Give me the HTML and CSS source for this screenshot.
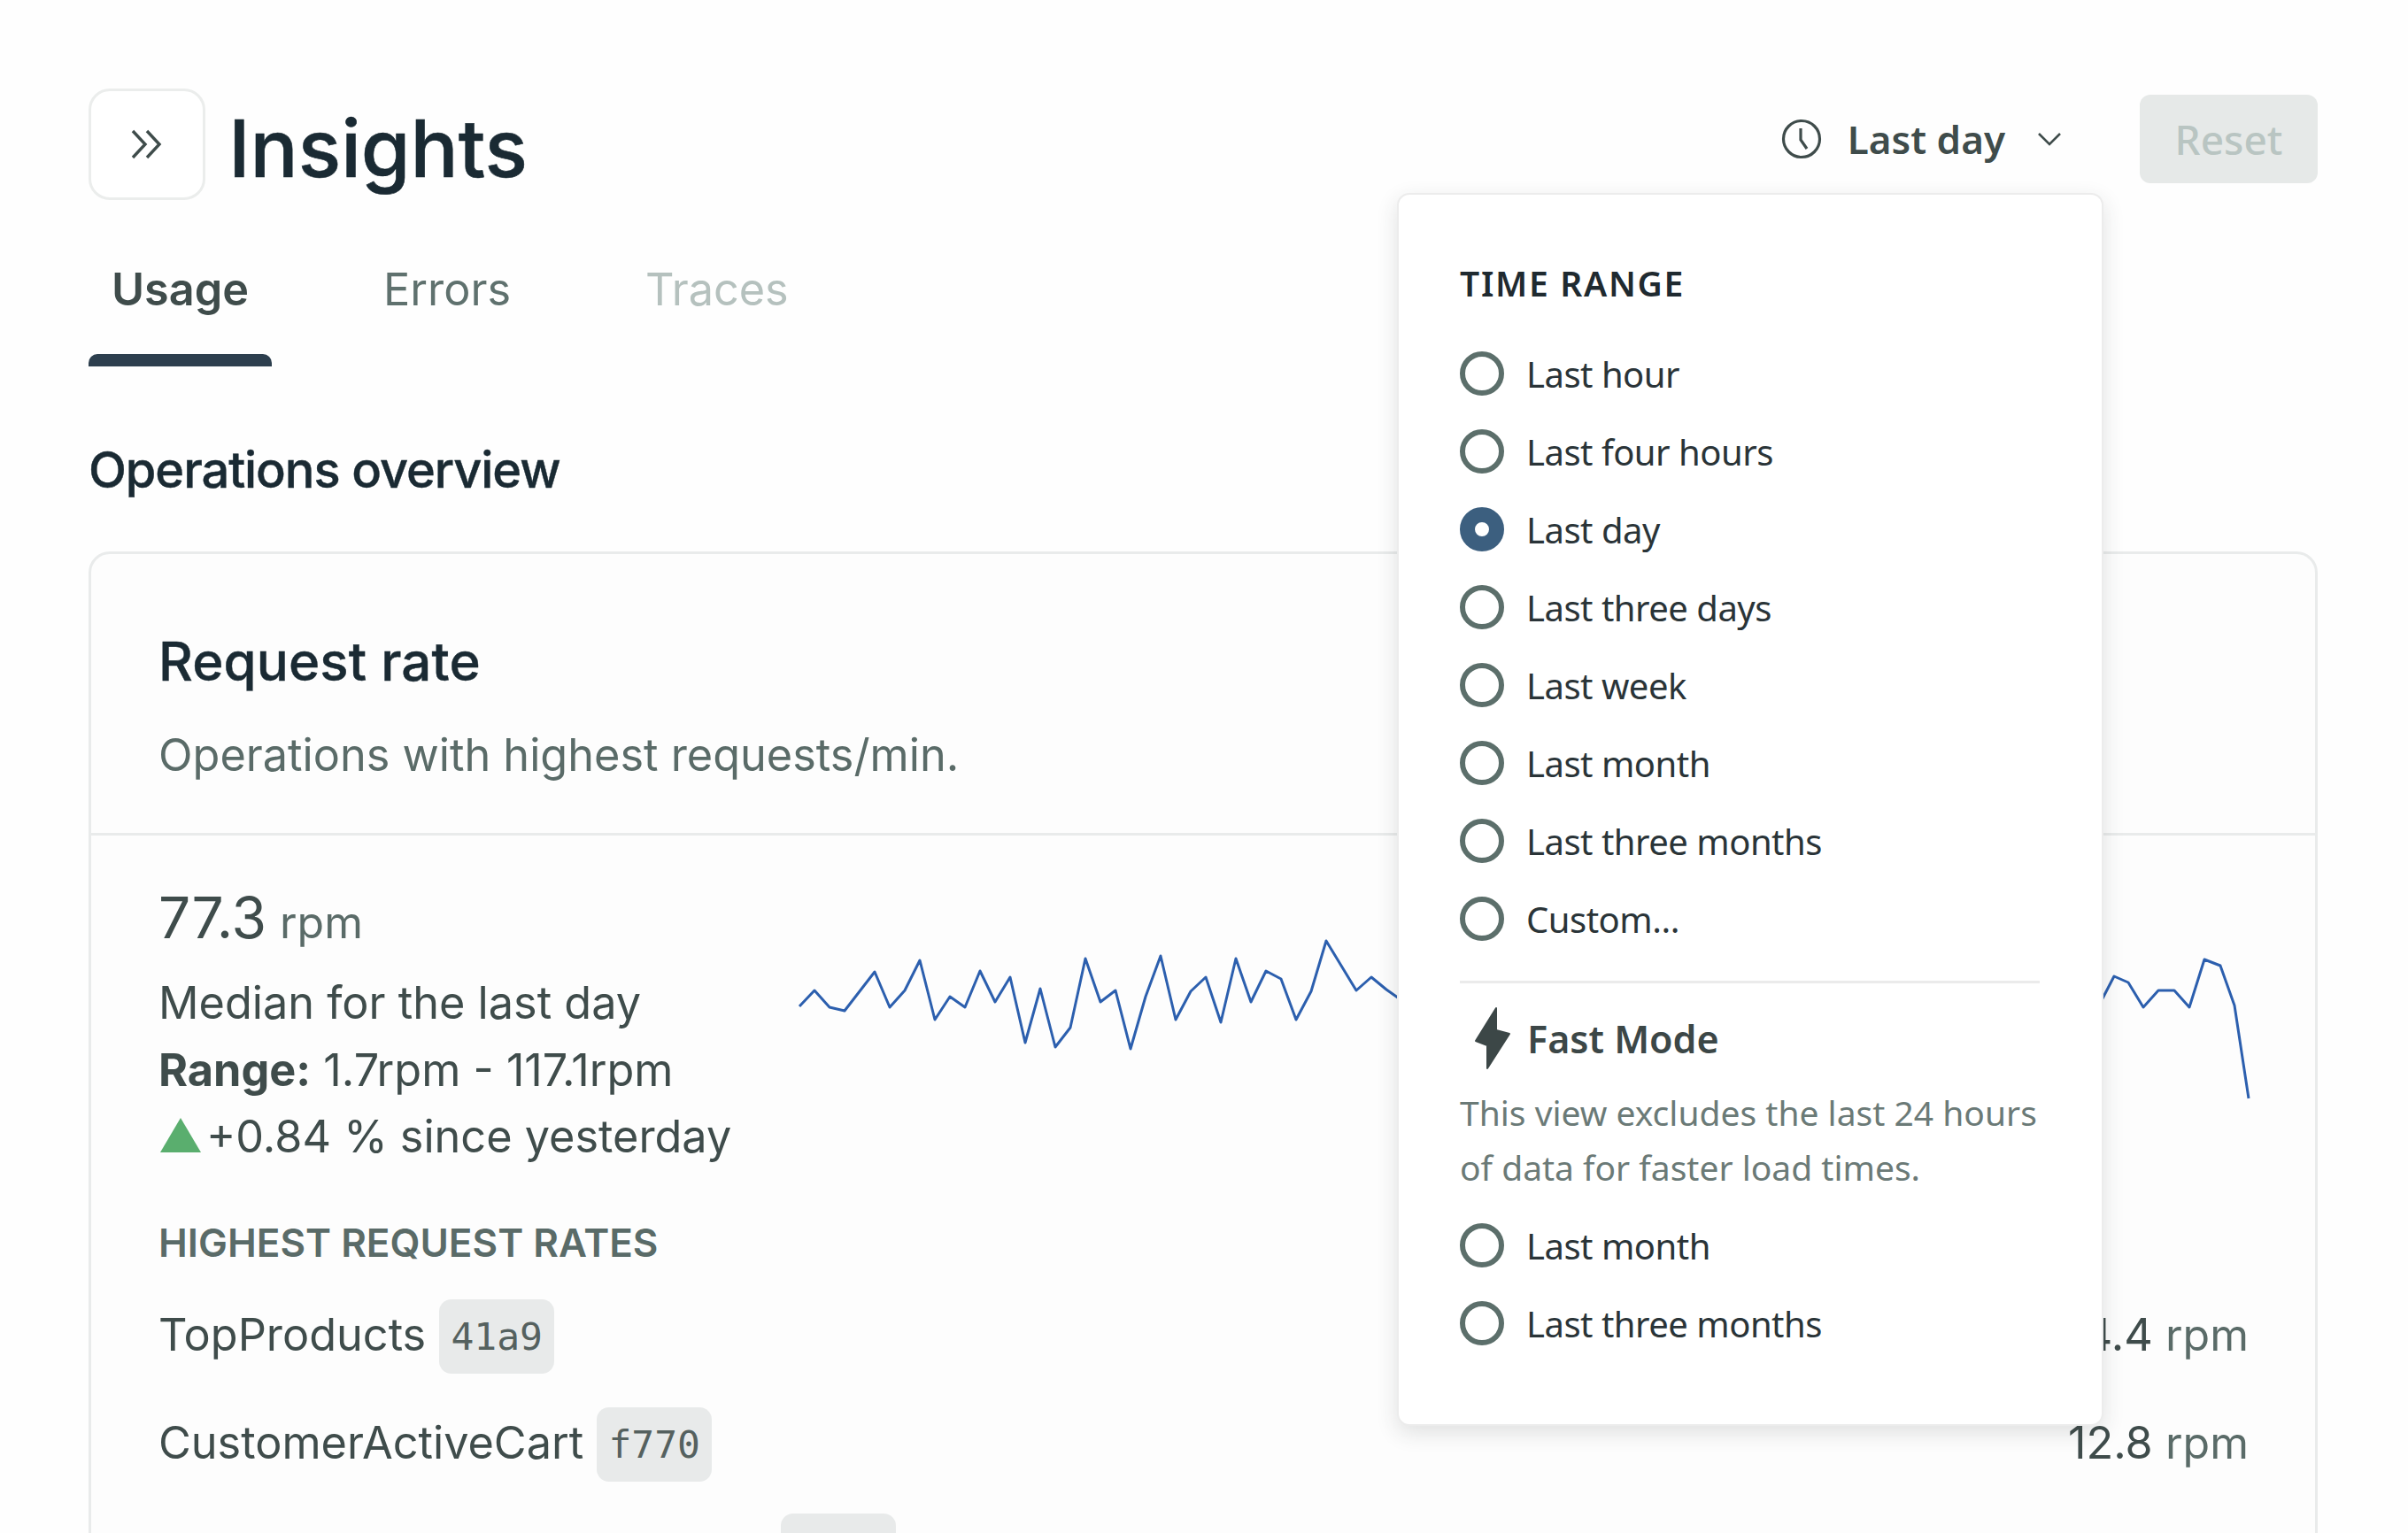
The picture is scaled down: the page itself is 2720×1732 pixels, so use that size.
FILE: index.html
```html
<!DOCTYPE html>
<html lang="en">
<head>
    <meta charset="UTF-8">
    <title>Insights</title>
    <link rel="stylesheet" href="styles.css">
</head>
<body>
    <div class="page">
        <!-- Header -->
        <header class="header">
            <button class="expand-btn">
                <svg width="40" height="36" viewBox="0 0 40 36" fill="none" stroke="#3f4c4b" stroke-width="3.4">
                    <path d="M4 3l14 15L4 33"/>
                    <path d="M20 3l14 15-14 15"/>
                </svg>
            </button>
            <h1 class="title">Insights</h1>
            <div class="range-picker">
                <svg width="46" height="46" viewBox="0 0 46 46" fill="none" stroke="#3f4c4b" stroke-width="3.2">
                    <circle cx="23" cy="23" r="20.5"/>
                    <path d="M22 11v13l7 10"/>
                </svg>
                <span class="range-label">Last day</span>
                <svg width="28" height="16" viewBox="0 0 28 16" fill="none" stroke="#3f4c4b" stroke-width="2.6">
                    <path d="M2 2l12 12L26 2"/>
                </svg>
            </div>
            <button class="reset-btn">Reset</button>
        </header>

        <!-- Tabs -->
        <nav class="tabs">
            <span class="tab active">Usage</span>
            <span class="tab">Errors</span>
            <span class="tab disabled">Traces</span>
        </nav>

        <h2 class="section-title">Operations overview</h2>

        <!-- Request rate card -->
        <section class="card">
            <div class="card-head">
                <h3 class="card-title">Request rate</h3>
                <p class="card-sub">Operations with highest requests/min.</p>
            </div>
            <div class="card-body">
                <div class="stat-row">
                    <div class="stat">
                        <div class="stat-value">77.3 <span class="unit">rpm</span></div>
                        <div class="stat-line">Median for the last day</div>
                        <div class="stat-line"><b>Range:</b> 1.7rpm - 117.1rpm</div>
                        <div class="stat-line"><span class="up-arrow"></span>+0.84 % since yesterday</div>
                    </div>
                    <svg class="chart" width="1642" height="200" viewBox="900 1060 1642 200" fill="none" stroke="#2c5fae" stroke-width="3" stroke-linejoin="round">
                        <polyline points="902,1139 919,1121 936,1140 953,1144 970,1122 987,1100 1004,1140 1021,1121 1038,1087 1055,1154 1072,1128 1089,1140 1106,1099 1123,1134 1140,1106 1157,1180 1174,1119 1191,1185 1208,1163 1225,1085 1242,1134 1259,1121 1276,1187 1293,1128 1310,1082 1327,1154 1344,1122 1361,1106 1378,1157 1395,1085 1412,1134 1429,1099 1446,1108 1463,1154 1480,1122 1497,1065 1514,1093 1531,1121 1548,1106 1565,1120 1582,1132 1700,1120 1900,1130 2100,1115 2300,1130 2373,1132 2387,1105 2403,1112 2420,1140 2437,1121 2455,1121 2472,1140 2489,1086 2507,1093 2523,1138 2539,1243"/>
                    </svg>
                </div>

                <h4 class="list-title">HIGHEST REQUEST RATES</h4>
                <div class="op-row">
                    <span class="op-name">TopProducts</span>
                    <span class="op-id">41a9</span>
                    <span class="op-rate">14.4 <span class="unit">rpm</span></span>
                </div>
                <div class="op-row">
                    <span class="op-name">CustomerActiveCart</span>
                    <span class="op-id">f770</span>
                    <span class="op-rate">12.8 <span class="unit">rpm</span></span>
                </div>
                <div class="op-row op-row-last">
                    <span class="op-spacer"></span>
                    <span class="op-id"></span>
                </div>
            </div>
        </section>

        <!-- Time range dropdown -->
        <div class="popover">
            <div class="popover-title">TIME RANGE</div>
            <div class="radio-item"><span class="radio"></span>Last hour</div>
            <div class="radio-item"><span class="radio"></span>Last four hours</div>
            <div class="radio-item"><span class="radio checked"></span>Last day</div>
            <div class="radio-item"><span class="radio"></span>Last three days</div>
            <div class="radio-item"><span class="radio"></span>Last week</div>
            <div class="radio-item"><span class="radio"></span>Last month</div>
            <div class="radio-item"><span class="radio"></span>Last three months</div>
            <div class="radio-item"><span class="radio"></span>Custom...</div>
            <div class="popover-divider"></div>
            <div class="fast-mode">
                <svg width="42" height="72" viewBox="0 0 42 72" fill="#3c4747" stroke="#3c4747" stroke-width="2" stroke-linejoin="round">
                    <path d="M25 2L2 39l13 5v26L40 31l-15-4z"/>
                </svg>
                <span>Fast Mode</span>
            </div>
            <p class="fast-desc">This view excludes the last 24 hours of data for faster load times.</p>
            <div class="radio-item"><span class="radio"></span>Last month</div>
            <div class="radio-item"><span class="radio"></span>Last three months</div>
        </div>
    </div>
</body>
</html>
```

FILE: styles.css
```css
* {
    box-sizing: border-box;
}

html, body {
    margin: 0;
    height: 100vh;
    overflow: hidden;
    background-color: #fefefe;
}

body {
    font-family: Inter, "Noto Sans", sans-serif;
    color: #3f4c4b;
}

.page {
    position: relative;
    height: 100%;
    overflow: hidden;
    padding: 100px 102px 0 100px;
}

/* Header */
.header {
    display: flex;
    align-items: flex-start;
    height: 126px;
}

.expand-btn {
    display: flex;
    align-items: center;
    justify-content: center;
    width: 132px;
    height: 126px;
    background-color: #fff;
    border: 3px solid #ebedec;
    border-radius: 24px;
    padding: 0;
}

.title {
    margin: 0 0 0 26px;
    font-size: 90px;
    line-height: 136px;
    font-weight: 500;
    -webkit-text-stroke: 0.6px #1a2a33;
    color: #1a2a33;
}

.range-picker {
    display: flex;
    align-items: center;
    margin-left: auto;
    margin-top: 34px;
    height: 46px;
    font-family: "Noto Sans", sans-serif;
}

.range-label {
    margin: 0 36px 0 29px;
    font-size: 44px;
    font-weight: 600;
}

.reset-btn {
    width: 201px;
    height: 100px;
    margin: 7px 0 0 88px;
    background-color: #e6e9e8;
    border: none;
    border-radius: 12px;
    font-family: "Noto Sans", sans-serif;
    font-size: 46px;
    font-weight: 500;
    color: #b9c5c2;
}

/* Tabs */
.tabs {
    display: flex;
    gap: 100px;
    margin-top: 68px;
}

.tab {
    position: relative;
    padding: 0 26px;
    height: 120px;
    font-size: 50.4px;
    line-height: 66px;
    font-weight: 400;
    color: #5f716e;
}

.tab.active {
    font-weight: 600;
    color: #3f4c4b;
}

.tab.active::after {
    content: "";
    position: absolute;
    left: 0;
    right: 0;
    bottom: 0;
    height: 14px;
    background-color: #2d3f4e;
    border-radius: 10px 10px 0 0;
}

.tab.disabled {
    color: #b5c1be;
}

.section-title {
    margin: 79px 0 0;
    font-size: 56px;
    line-height: 76px;
    font-weight: 500;
    letter-spacing: -1.1px;
    -webkit-text-stroke: 0.4px #1a2a33;
    color: #1a2a33;
}

/* Card */
.card {
    margin-top: 54px;
    background-color: #fdfdfd;
    border: 3px solid #e9ebeb;
    border-radius: 24px;
}

.card-head {
    height: 318px;
    padding: 79px 76px 0;
    border-bottom: 3px solid #e9ebeb;
}

.card-title {
    margin: 0;
    font-size: 60px;
    line-height: 84px;
    font-weight: 500;
    letter-spacing: 0.1px;
    -webkit-text-stroke: 0.4px #1a2a33;
    color: #1a2a33;
}

.card-sub {
    margin: 26px 0 0;
    font-size: 50.4px;
    line-height: 76px;
    color: #5a6b68;
}

.card-body {
    padding: 55px 75px 0 76px;
}

.stat-row {
    display: flex;
}

.stat {
    width: 720px;
    flex-shrink: 0;
}

.stat-value {
    font-size: 64px;
    line-height: 76px;
    margin-bottom: 15px;
}

.unit {
    font-size: 50px;
    color: #5a6b68;
}

.stat-value .unit {
    margin-left: -3px;
}

.stat-line {
    font-size: 50.4px;
    line-height: 75.6px;
    white-space: nowrap;
}

.up-arrow {
    display: inline-block;
    width: 0;
    height: 0;
    margin: 0 6px 0 2px;
    border-left: 23px solid transparent;
    border-right: 23px solid transparent;
    border-bottom: 39px solid #5aae6e;
}

.chart {
    flex-shrink: 0;
    margin: 59px 0 0 2px;
    overflow: visible;
}

.list-title {
    margin: 52px 0 0;
    font-size: 44px;
    line-height: 60px;
    font-weight: 600;
    color: #5a6b68;
}

.op-row {
    display: flex;
    align-items: flex-start;
    gap: 15px;
    height: 84px;
    margin-bottom: 38px;
    font-size: 50.4px;
    line-height: 80px;
}

.list-title + .op-row {
    margin-top: 34px;
}

.op-row-last {
    margin-top: -2px;
}

.op-id {
    width: 130px;
    height: 84px;
    background-color: #e8eaea;
    border-radius: 14px;
    font-family: "DejaVu Sans Mono", monospace;
    font-size: 43px;
    line-height: 84px;
    text-align: center;
    color: #55615f;
}

.op-rate {
    margin-left: auto;
}

.op-spacer {
    width: 688px;
}

/* Time range dropdown */
.popover {
    position: absolute;
    left: 1578px;
    top: 218px;
    width: 798px;
    height: 1393px;
    padding: 72px 70px 0 69px;
    background-color: #fff;
    border: 2px solid #ececec;
    border-radius: 14px;
    box-shadow: 0 8px 24px rgba(40, 50, 50, 0.14);
    font-family: "Noto Sans", sans-serif;
}

.popover-title {
    font-size: 39px;
    line-height: 56px;
    font-weight: 600;
    letter-spacing: 1.7px;
    color: #1f2a30;
    margin-bottom: 30px;
}

.radio-item {
    display: flex;
    align-items: center;
    height: 88px;
    font-size: 40px;
    letter-spacing: -0.5px;
    color: #2a3438;
    white-space: nowrap;
}

.radio {
    width: 50px;
    height: 50px;
    margin-right: 25px;
    border: 6px solid #5c6f6b;
    border-radius: 50%;
    flex-shrink: 0;
}

.radio.checked {
    background-color: #fff;
    border: 17px solid #3c5f7f;
}

.popover-divider {
    height: 3px;
    margin-top: 26px;
    background-color: #ebebeb;
}

.fast-mode {
    display: flex;
    align-items: center;
    margin: 24px 0 0 16px;
    height: 76px;
    font-size: 43px;
    font-weight: 600;
    color: #3c4747;
}

.fast-mode span {
    margin-left: 18px;
}

.fast-desc {
    margin: 15px -10px 13px 0;
    font-size: 39px;
    line-height: 62px;
    color: #6b7a77;
}
```
